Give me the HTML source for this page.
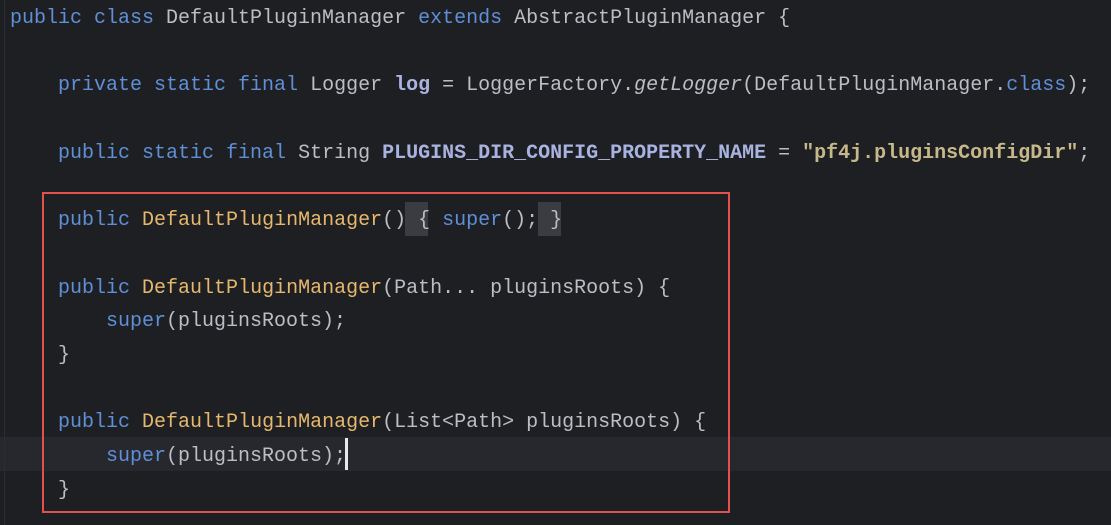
<!DOCTYPE html>
<html><head><style>
html,body{margin:0;padding:0;background:#1e1f22;width:1111px;height:525px;overflow:hidden}
.c{position:absolute;left:10px;top:2px;font-family:"Liberation Mono",monospace;font-size:20px;line-height:33.7px;color:#bcbec4;white-space:pre}
.k{color:#5f8fd6}.m{color:#e6b86e}.b{font-weight:bold;color:#a9b3e0}.s{font-weight:bold;color:#c6b88a}.i{font-style:italic}
.hl{position:absolute;left:0;top:437px;width:1111px;height:34px;background:#26282d}
.gut{position:absolute;left:4px;top:0;width:1px;height:525px;background:#2b2d31}
.box{position:absolute;left:42px;top:192px;width:684px;height:317px;border:2px solid #e0514f}
.br{position:absolute;top:202px;width:23px;height:34px;background:#3a3c41}
.cur{position:absolute;left:345px;top:438px;width:3px;height:32px;background:#e8e8e8}
</style></head><body>
<div class="hl"></div><div class="gut"></div>
<div class="br" style="left:405px"></div><div class="br" style="left:538px"></div>
<div class="c"><span class="k">public class</span> DefaultPluginManager <span class="k">extends</span> AbstractPluginManager {

    <span class="k">private static final</span> Logger <span class="b">log</span> = LoggerFactory.<span class="i">getLogger</span>(DefaultPluginManager.<span class="k">class</span>);

    <span class="k">public static final</span> String <span class="b">PLUGINS_DIR_CONFIG_PROPERTY_NAME</span> = <span class="s">"pf4j.pluginsConfigDir"</span>;

    <span class="k">public</span> <span class="m">DefaultPluginManager</span>() { <span class="k">super</span>(); }

    <span class="k">public</span> <span class="m">DefaultPluginManager</span>(Path... pluginsRoots) {
        <span class="k">super</span>(pluginsRoots);
    }

    <span class="k">public</span> <span class="m">DefaultPluginManager</span>(List&lt;Path&gt; pluginsRoots) {
        <span class="k">super</span>(pluginsRoots);
    }</div>
<div class="cur"></div>
<div class="box"></div>
</body></html>
